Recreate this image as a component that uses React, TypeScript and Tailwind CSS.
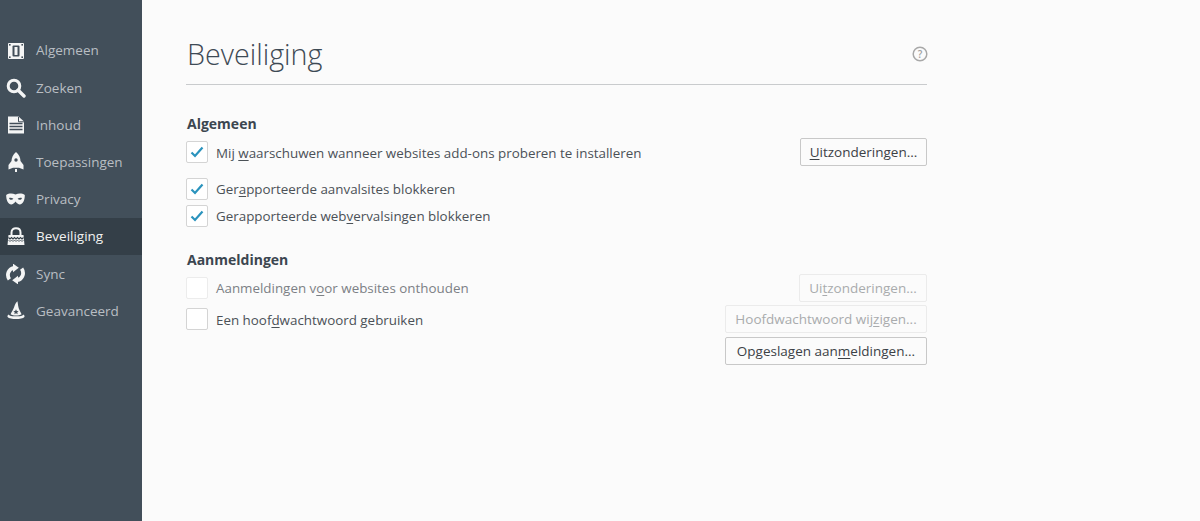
import React from "react";

const IconGeneral = () => (
  <svg width="18" height="18" viewBox="0 0 18 18">
    <rect x="1" y="1" width="16" height="16" rx="1" fill="#f4f5f5" />
    <rect x="5.5" y="3.5" width="7" height="11" rx="1" fill="#424e59" />
    <rect x="7.5" y="5" width="3" height="8" fill="#f4f5f5" />
    <rect x="2" y="2" width="1.6" height="1.6" fill="#424e59" />
    <rect x="14.4" y="2" width="1.6" height="1.6" fill="#424e59" />
    <rect x="2" y="14.4" width="1.6" height="1.6" fill="#424e59" />
    <rect x="14.4" y="14.4" width="1.6" height="1.6" fill="#424e59" />
  </svg>
);
const IconSearch = () => (
  <svg width="20" height="20" viewBox="0 0 20 20" fill="none" stroke="#f4f5f5">
    <circle cx="8" cy="8" r="5.8" strokeWidth="3" />
    <path d="M12.2 12.2 L18 18" strokeWidth="3.4" strokeLinecap="round" />
  </svg>
);
const IconContent = () => (
  <svg width="18" height="18" viewBox="0 0 18 18">
    <path d="M1 0.5 H11.5 L17 5.5 V17.5 H1 Z" fill="#f4f5f5" />
    <path d="M11.5 1 V5.8 H17" fill="none" stroke="#424e59" strokeWidth="1" />
    <path d="M2.5 7.5 H15.5 M2.5 10.5 H15.5 M2.5 13.5 H15.5" stroke="#424e59" strokeWidth="1.3" />
  </svg>
);
const IconRocket = () => (
  <svg width="16" height="21" viewBox="0 0 16 21">
    <path d="M8 0 C11 2.5 12.5 6 12.5 9 L15.5 13 V17.5 L11 15.8 H5 L0.5 17.5 V13 L3.5 9 C3.5 6 5 2.5 8 0 Z" fill="#f4f5f5" />
    <circle cx="8" cy="8" r="1.7" fill="#424e59" />
    <rect x="7" y="17" width="2" height="3" fill="#f4f5f5" />
  </svg>
);
const IconMask = () => (
  <svg width="19" height="12" viewBox="0 0 19 12">
    <path fillRule="evenodd" d="M0.2 2 C3 0.2 6.5 0.2 9.5 1.6 C12.5 0.2 16 0.2 18.8 2 C18.9 6 17.5 11.5 13.5 11.5 C11.5 11.5 10.5 9.6 9.5 8.6 C8.5 9.6 7.5 11.5 5.5 11.5 C1.5 11.5 0.1 6 0.2 2 Z M3 5 C3.6 7 6 7.6 7.4 5.8 C6 4.6 4.4 4.4 3 5 Z M16 5 C15.4 7 13 7.6 11.6 5.8 C13 4.6 14.6 4.4 16 5 Z" fill="#f4f5f5" />
  </svg>
);
const IconLock = () => (
  <svg width="18" height="19" viewBox="0 0 18 19">
    <path d="M4.5 8 V5.5 C4.5 2.8 6.5 1.2 9 1.2 C11.5 1.2 13.5 2.8 13.5 5.5 V8" fill="none" stroke="#f4f5f5" strokeWidth="2" />
    <path d="M1.5 8 H16.5 L17.5 18 H0.5 Z" fill="#f4f5f5" />
    <path d="M1.5 10.5 L3 12 L4.5 10.5 L6 12 L7.5 10.5 L9 12 L10.5 10.5 L12 12 L13.5 10.5 L15 12 L16.5 10.5" fill="none" stroke="#343f48" strokeWidth="1.1" />
    <path d="M1.5 13 L3 14.5 L4.5 13 L6 14.5 L7.5 13 L9 14.5 L10.5 13 L12 14.5 L13.5 13 L15 14.5 L16.5 13" fill="none" stroke="#343f48" strokeWidth="0.8" />
  </svg>
);
const IconSync = () => (
  <svg width="19" height="20" viewBox="0 0 19 20" fill="none" stroke="#f4f5f5">
    <path d="M3.4 15.4 C0.4 11.2 2.2 4.8 8 3.8" strokeWidth="3.8" />
    <path d="M7 -0.4 L12.8 3.8 L7 8.2 Z" fill="#f4f5f5" stroke="none" />
    <path d="M15.6 4.6 C18.6 8.8 16.8 15.2 11 16.2" strokeWidth="3.8" />
    <path d="M12 11.8 L6.2 16.2 L12 20.4 Z" fill="#f4f5f5" stroke="none" />
  </svg>
);
const IconHat = () => (
  <svg width="18" height="19" viewBox="0 0 18 19">
    <path d="M10.5 0.3 C8.6 2 7.8 4 7 6.5 C6 9 4.6 11 3.6 13.2 C6 15 12 15 14.6 13.2 C13.4 10.4 11.6 8 11.2 5 L10.5 0.3 Z" fill="#f4f5f5" />
    <path d="M1.6 13.4 C0.6 14 0.2 15 0.6 16 C3 18.8 15 18.8 17.4 16 C17.8 15 17.4 14 16.4 13.4 C15.8 16 2.4 16 1.6 13.4 Z" fill="#f4f5f5" />
    <path d="M9 8.2 L9.8 10 L11.6 10.2 L10.2 11.4 L10.7 13.2 L9 12.2 L7.3 13.2 L7.8 11.4 L6.4 10.2 L8.2 10 Z" fill="#424e59" />
  </svg>
);

const nav: [string, React.ReactNode, boolean?][] = [
  ["Algemeen", <IconGeneral />],
  ["Zoeken", <IconSearch />],
  ["Inhoud", <IconContent />],
  ["Toepassingen", <IconRocket />],
  ["Privacy", <IconMask />],
  ["Beveiliging", <IconLock />, true],
  ["Sync", <IconSync />],
  ["Geavanceerd", <IconHat />],
];

const Box = ({ checked, disabled }: { checked?: boolean; disabled?: boolean }) => (
  <span className={`flex h-[22px] w-[22px] shrink-0 items-center justify-center rounded-[2px] border bg-white ${disabled ? "border-[#ececec]" : "border-[#d4d4d4]"}`}>
    {checked && (
      <svg width="14" height="12" viewBox="0 0 14 12" fill="none">
        <path d="M1.5 6.5 L5 10 L12.5 1.5" stroke="#2a93bd" strokeWidth="2.2" />
      </svg>
    )}
  </span>
);

const Btn = ({ children, disabled, w }: { children: React.ReactNode; disabled?: boolean; w: string }) => (
  <button className={`${w} flex h-[28px] shrink-0 items-center justify-center rounded-[2px] border bg-[#fbfbfb] text-[13.5px] ${disabled ? "border-[#ebebeb] text-[#a9abad]" : "border-[#c8c8c8] text-[#3c4146]"}`}>
    <span>{children}</span>
  </button>
);

const Row = ({ checked, disabled, tight, children }: { checked?: boolean; disabled?: boolean; tight?: boolean; children: React.ReactNode }) => (
  <div className="flex items-center gap-[8px]">
    <Box checked={checked} disabled={disabled} />
    <span className={`${tight ? "pt-0" : "pt-[1px]"} text-[13.38px] leading-[20px] ${disabled ? "text-[#7c8085]" : "text-[#4b5157]"}`}>{children}</span>
  </div>
);

export default function App() {
  return (
    <div className="flex h-[521px] w-[1200px] overflow-hidden bg-[#fbfbfb] font-['Open_Sans',sans-serif]">
      <aside className="h-full w-[142px] shrink-0 bg-[#424f5a] pt-[32px]">
        {nav.map(([label, icon, active]) => (
          <div key={label} className={`flex h-[37.2px] items-center ${active ? "bg-[#343f48] text-[#f1f1f1]" : "text-[#b9bec3]"}`}>
            <span className="flex w-[36px] shrink-0 items-center justify-center pr-[5px]">{icon}</span>
            <span className="text-[13.5px]">{label}</span>
          </div>
        ))}
      </aside>
      <main className="ml-[44px] flex w-[741px] flex-col">
        <header className="mt-[32px] flex h-[53px] items-start justify-between border-b border-[#c9cbcd]">
          <h1 className="pl-[1px] text-[28.7px] leading-[44px] font-light text-[#3e4a55]">Beveiliging</h1>
          <svg className="mr-[-1px] mt-[14px]" width="16" height="16" viewBox="0 0 16 16" fill="none">
            <circle cx="8" cy="8" r="6.8" stroke="#a8a8a8" strokeWidth="1.5" />
            <text x="8" y="11.5" textAnchor="middle" fontSize="10" fontWeight="600" fill="#a0a0a0">?</text>
          </svg>
        </header>
        <h2 className="mt-[29px] pl-[1px] text-[14px] leading-[20px] font-bold text-[#3c4650]">Algemeen</h2>
        <div className="mt-[4px] flex h-[28px] items-center justify-between">
          <Row checked>Mij <u className="underline-offset-2">w</u>aarschuwen wanneer websites add-ons proberen te installeren</Row>
          <Btn w="w-[127px]"><u className="underline-offset-2">U</u>itzonderingen...</Btn>
        </div>
        <div className="mt-[12px] flex flex-col gap-[5px]">
          <Row checked tight>Ger<u className="underline-offset-2">a</u>pporteerde aanvalsites blokkeren</Row>
          <Row checked tight>Gerapporteerde web<u className="underline-offset-2">v</u>ervalsingen blokkeren</Row>
        </div>
        <h2 className="mt-[23px] pl-[1px] text-[14px] leading-[20px] font-bold text-[#3c4650]">Aanmeldingen</h2>
        <div className="mt-[4px] flex h-[28px] items-center justify-between">
          <Row disabled tight>Aanmeldingen v<u className="underline-offset-2">o</u>or websites onthouden</Row>
          <Btn disabled w="w-[128px]">Ui<u className="underline-offset-2">t</u>zonderingen...</Btn>
        </div>
        <div className="mt-[3px] flex h-[28px] items-center justify-between">
          <Row>Een hoof<u className="underline-offset-2">d</u>wachtwoord gebruiken</Row>
          <Btn disabled w="w-[202px]">Hoofdwachtwoord wij<u className="underline-offset-2">z</u>igen...</Btn>
        </div>
        <div className="mt-[4px] flex justify-end">
          <Btn w="w-[202px]">Opgeslagen aan<u className="underline-offset-2">m</u>eldingen...</Btn>
        </div>
      </main>
    </div>
  );
}
